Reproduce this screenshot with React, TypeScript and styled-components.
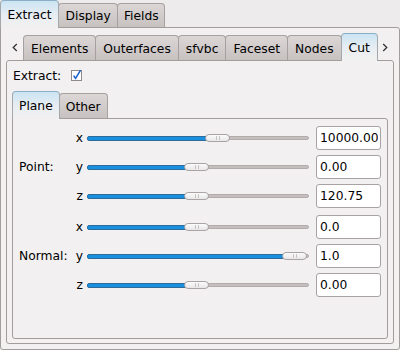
import React from 'react';
import styled, {createGlobalStyle, css} from "styled-components";

const GlobalStyle = createGlobalStyle`
  html, body {
    margin: 0;
    padding: 0;
  }
  body {
    background: #edebeb;
    font-family: "DejaVu Sans", "Liberation Sans", sans-serif;
    font-size: 12.3px;
    color: #000;
  }
`

type Row = { axis: string, value: string, pos: number }

const pointRows: Row[] = [
    {axis: 'x', value: '10000.00', pos: 0.61},
    {axis: 'y', value: '0.00', pos: 0.5},
    {axis: 'z', value: '120.75', pos: 0.5},
]

const normalRows: Row[] = [
    {axis: 'x', value: '0.0', pos: 0.5},
    {axis: 'y', value: '1.0', pos: 1},
    {axis: 'z', value: '0.00', pos: 0.5},
]

const TRAVEL = 197

const Slider = ({pos}: { pos: number }) => {
    return (
        <StyledSlider>
            <Fill style={{width: Math.round(pos * TRAVEL)}}/>
            <Handle/>
            <Groove/>
        </StyledSlider>
    );
};

const Group = ({label, rows}: { label: string, rows: Row[] }) => {
    return (
        <GroupGrid>
            <GroupLabel>{label}</GroupLabel>
            {rows.map((r, i) => (
                <React.Fragment key={r.axis}>
                    <Axis style={{gridRow: i + 1}}>{r.axis}</Axis>
                    <SliderCell style={{gridRow: i + 1}}>
                        <Slider pos={r.pos}/>
                    </SliderCell>
                    <Field style={{gridRow: i + 1}} readOnly value={r.value}/>
                </React.Fragment>
            ))}
        </GroupGrid>
    );
};

const Chevron = ({dir}: { dir: 'left' | 'right' }) => (
    <svg width="6" height="9" viewBox="0 0 6 9">
        <polyline
            points={dir === 'left' ? "4.8,1 1.2,4.5 4.8,8" : "1.2,1 4.8,4.5 1.2,8"}
            fill="none" stroke="#2e2e2e" strokeWidth="1.2"/>
    </svg>
);

const Check = () => (
    <svg width="12" height="13" viewBox="0 0 12 13">
        <rect x="0.5" y="1.5" width="10" height="10" fill="#fff" stroke="#8f8a8a"/>
        <path d="M2.6 6.6 L4.6 9.4 L9.6 1.2" fill="none" stroke="#1c62cf" strokeWidth="1.6"/>
    </svg>
);

export default function App() {
    return (
        <>
            <GlobalStyle/>
            <Window>
                <TabBar $h={27}>
                    <Tab $active $h={28} $pad={6.5}>Extract</Tab>
                    <Tab $h={24} $pad={6.5}>Display</Tab>
                    <Tab $h={24} $pad={5.5}>Fields</Tab>
                </TabBar>
                <Panel $pad={"5px"} $first>
                    <TabBar $h={27}>
                        <ScrollButton $w={17}><Chevron dir="left"/></ScrollButton>
                        <Tab $h={25} $pad={7}>Elements</Tab>
                        <Tab $h={25} $pad={7}>Outerfaces</Tab>
                        <Tab $h={25} $pad={7}>sfvbc</Tab>
                        <Tab $h={25} $pad={7}>Faceset</Tab>
                        <Tab $h={25} $pad={7}>Nodes</Tab>
                        <Tab $active $h={28} $pad={7}>Cut</Tab>
                        <ScrollButton><Chevron dir="right"/></ScrollButton>
                    </TabBar>
                    <Panel $pad={"4px 5px 4px 5px"}>
                        <ExtractRow>
                            <span>Extract:</span>
                            <Check/>
                        </ExtractRow>
                        <TabBar $h={27}>
                            <Tab $active $h={28} $pad={6}>Plane</Tab>
                            <Tab $h={25} $pad={6}>Other</Tab>
                        </TabBar>
                        <Panel $pad={"7px 6px 0 5px"} $first>
                            <Group label="Point:" rows={pointRows}/>
                            <Group label="Normal:" rows={normalRows}/>
                        </Panel>
                    </Panel>
                </Panel>
            </Window>
        </>
    );
}

const Window = styled.div`
  width: 400px;
  height: 350px;
  display: flex;
  flex-direction: column;
`

const TabBar = styled.div<{ $h: number }>`
  display: flex;
  align-items: flex-end;
  height: ${p => p.$h}px;
  flex: none;
`

const Tab = styled.div<{ $active?: boolean, $h: number, $pad: number }>`
  box-sizing: border-box;
  display: flex;
  align-items: center;
  justify-content: center;
  height: ${p => p.$h}px;
  padding: 1px ${p => p.$pad}px 0;
  border: 1px solid #a6a09f;
  border-bottom: none;
  border-radius: 4px 4px 0 0;
  margin-right: -1px;
  white-space: nowrap;
  position: relative;
  ${p => p.$active ? css`
    margin-bottom: -1px;
    z-index: 1;
    border-color: #8aaec6 #a3a8ad #f2f0f0;
    background: linear-gradient(#cbe4f3, #e9eef2 55%, #f2f0f0);
  ` : css`
    background: linear-gradient(#dcd7d6, #c7c1c0);
  `}
`

const ScrollButton = styled.div<{ $w?: number }>`
  align-self: stretch;
  display: flex;
  align-items: center;
  justify-content: center;
  padding-top: 2px;
  ${p => p.$w ? css`width: ${p.$w}px; flex: none;` : css`flex: 1;`}
`

const Panel = styled.div<{ $pad: string, $first?: boolean }>`
  flex: 1;
  min-height: 0;
  box-sizing: border-box;
  display: flex;
  flex-direction: column;
  border: 1px solid #a29c9b;
  border-radius: ${p => p.$first ? '0 3px 3px 3px' : '3px'};
  background: #f2f0f0;
  padding: ${p => p.$pad};
`

const ExtractRow = styled.div`
  display: flex;
  align-items: center;
  gap: 10px;
  height: 22px;
  margin-bottom: 4px;
  padding-left: 1px;

  svg {
    margin-top: -1px;
  }
`

const GroupGrid = styled.div`
  display: grid;
  grid-template-columns: 56px 9px 1fr 65px;
  grid-auto-rows: 24px;
  row-gap: 5px;
  margin-bottom: 7px;
`

const GroupLabel = styled.div`
  grid-column: 1;
  grid-row: 1 / 4;
  align-self: center;
  padding-left: 1px;
`

const Axis = styled.div`
  grid-column: 2;
  display: flex;
  align-items: center;
  justify-content: flex-end;
`

const SliderCell = styled.div`
  grid-column: 3;
  margin: 0 7px 0 4px;
  display: flex;
  align-items: center;
`

const StyledSlider = styled.div`
  flex: 1;
  display: flex;
  align-items: center;
  height: 10px;
`

const Fill = styled.div`
  box-sizing: border-box;
  height: 5px;
  margin-right: -2px;
  background: #1a8fdd;
  border: 1px solid #2b6c9c;
  border-radius: 2px 0 0 2px;
`

const Handle = styled.div`
  box-sizing: border-box;
  flex: none;
  width: 25px;
  height: 8px;
  position: relative;
  z-index: 1;
  border: 1px solid #a9a4a3;
  border-radius: 4px;
  background: linear-gradient(#fbfbfb, #e9e7e7);

  &::after {
    content: '';
    position: absolute;
    left: 9px;
    top: 1px;
    width: 6px;
    height: 4px;
    background-image: radial-gradient(#c8c4c3 45%, transparent 50%);
    background-size: 3px 2px;
  }
`

const Groove = styled.div`
  box-sizing: border-box;
  flex: 1;
  height: 4px;
  margin-left: -2px;
  background: #c4bfbe;
  border: 1px solid #b2adac;
  border-radius: 0 2px 2px 0;
`

const Field = styled.input`
  grid-column: 4;
  box-sizing: border-box;
  width: 65px;
  height: 24px;
  margin: 0;
  padding: 0 2px 0 3px;
  border: 1px solid #a8a3a2;
  border-radius: 3px;
  background: #fff;
  font: inherit;
  color: #000;
  outline: none;
`
